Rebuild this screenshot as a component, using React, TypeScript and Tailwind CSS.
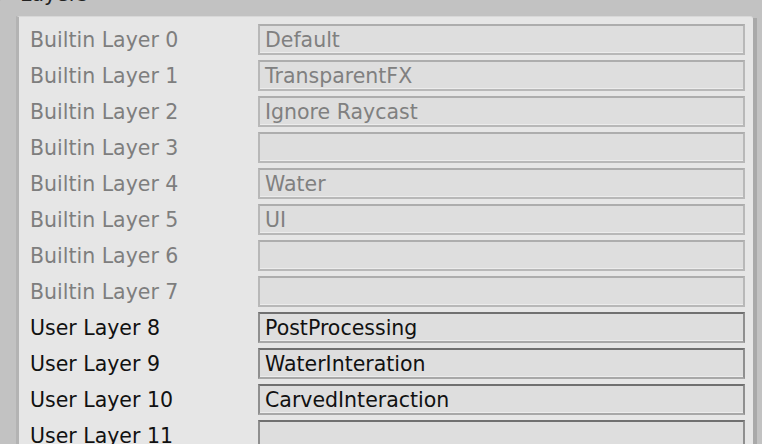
import React from 'react';

const layers = [
  { label: 'Builtin Layer 0', value: 'Default', builtin: true },
  { label: 'Builtin Layer 1', value: 'TransparentFX', builtin: true },
  { label: 'Builtin Layer 2', value: 'Ignore Raycast', builtin: true },
  { label: 'Builtin Layer 3', value: '', builtin: true },
  { label: 'Builtin Layer 4', value: 'Water', builtin: true },
  { label: 'Builtin Layer 5', value: 'UI', builtin: true },
  { label: 'Builtin Layer 6', value: '', builtin: true },
  { label: 'Builtin Layer 7', value: '', builtin: true },
  { label: 'User Layer 8', value: 'PostProcessing', builtin: false },
  { label: 'User Layer 9', value: 'WaterInteration', builtin: false },
  { label: 'User Layer 10', value: 'CarvedInteraction', builtin: false },
  { label: 'User Layer 11', value: '', builtin: false },
];

export default function App() {
  return (
    <div
      className="w-[762px] h-[444px] overflow-hidden bg-[#c2c2c2]"
      style={{ fontFamily: '"DejaVu Sans", Verdana, sans-serif' }}
    >
      {/* foldout header, mostly scrolled off */}
      <div className="flex items-start h-[16px] text-[20.5px] text-[#222] leading-none">
        <span className="w-0 h-0 -mt-[8px] border-t-[6px] border-b-[6px] border-l-[8px] border-t-transparent border-b-transparent border-l-[#333] -ml-[5px] mr-[17px]" />
        <span className="-mt-[16px]">Layers</span>
      </div>

      <div className="ml-[16px] mr-[5px] flex">
        <div className="flex-1 bg-[#e6e6e6] border-l-[3px] border-l-[#b3b3b3] border-t border-t-[#d8d8d8] rounded-tr-[3px] pt-[7px] pl-[11px] pr-[8px]">
          {layers.map((l) => (
            <div key={l.label} className="flex items-center h-[31px] mb-[5px]">
              <span
                className={`w-[228px] pt-[2px] text-[20.5px] leading-none ${l.builtin ? 'text-[#7e7e7e]' : 'text-[#111]'}`}
              >
                {l.label}
              </span>
              <div
                className={`flex-1 h-[31px] flex items-center pl-[5px] pt-[2px] text-[20.5px] leading-none bg-[#dedede] border-2 ${
                  l.builtin
                    ? 'border-[#b8b8b8] border-t-[#adadad] text-[#808080] shadow-[inset_0_-1px_0_#ececec]'
                    : 'border-[#8f8f8f] border-t-[#707070] border-b-[#a8a8a8] text-[#111] shadow-[inset_0_-1px_0_#ececec]'
                }`}
              >
                {l.value}
              </div>
            </div>
          ))}
        </div>
        <div className="w-[4px] bg-[#a9a9a9] mt-[2px]" />
      </div>
    </div>
  );
}
